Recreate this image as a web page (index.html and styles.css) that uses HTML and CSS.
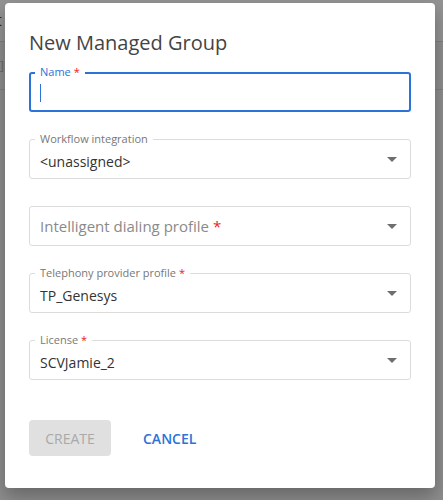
FILE: index.html
```html
<!DOCTYPE html>
<html lang="en">
<head>
<meta charset="utf-8">
<title>New Managed Group</title>
<link rel="stylesheet" href="styles.css">
</head>
<body>
<div class="backdrop-page">
  <span class="bg-t">t</span>
  <span class="bg-b">]:</span>
</div>
<div class="dialog">
  <h1 class="title">New Managed Group</h1>
  <div class="form">
    <div class="field focused">
      <span class="label">Name <span class="req">*</span></span>
      <span class="caret"></span>
    </div>
    <div class="field select">
      <span class="label">Workflow integration</span>
      <span class="value">&lt;unassigned&gt;</span>
      <span class="arrow"></span>
    </div>
    <div class="field select empty">
      <span class="placeholder">Intelligent dialing profile <span class="req">*</span></span>
      <span class="arrow"></span>
    </div>
    <div class="field select">
      <span class="label">Telephony provider profile <span class="req">*</span></span>
      <span class="value">TP_Genesys</span>
      <span class="arrow"></span>
    </div>
    <div class="field select">
      <span class="label">License <span class="req">*</span></span>
      <span class="value">SCVJamie_2</span>
      <span class="arrow"></span>
    </div>
  </div>
  <div class="actions">
    <button class="btn btn-create" disabled>CREATE</button>
    <button class="btn btn-cancel">CANCEL</button>
  </div>
</div>
</body>
</html>
```
FILE: styles.css
```css
html, body {
  margin: 0;
  padding: 0;
}
body {
  width: 443px;
  height: 500px;
  overflow: hidden;
  position: relative;
  background: #8d8d8d;
  font-family: "Open Sans", "Noto Sans", sans-serif;
}
.backdrop-page {
  position: absolute;
  inset: 0;
  background:
    linear-gradient(#7f7f7f, #7f7f7f) 0 41px / 100% 1px no-repeat,
    linear-gradient(#7f7f7f, #7f7f7f) 0 89px / 100% 1px no-repeat,
    linear-gradient(#939393, #939393) 0 0 / 100% 41px no-repeat;
}
.bg-t {
  position: absolute;
  left: -4px;
  top: 9px;
  font-size: 16px;
  color: #222;
}
.bg-b {
  position: absolute;
  left: 0;
  top: 57px;
  font-size: 12px;
  color: #666;
}
.dialog {
  position: relative;
  margin: 3px 0 0 5px;
  width: 430px;
  height: 485px;
  box-sizing: border-box;
  background: #fff;
  border-radius: 4px;
  padding: 26px 24px 0 24px;
  box-shadow: 0 8px 18px rgba(0, 0, 0, 0.28);
}
.title {
  margin: 0;
  font-size: 20px;
  line-height: 28px;
  font-weight: 400;
  color: #444;
}
.form {
  margin-top: 15px;
  display: flex;
  flex-direction: column;
  gap: 27px;
}
.field {
  position: relative;
  height: 40px;
  box-sizing: border-box;
  border: 1px solid #dcdcdc;
  border-radius: 3px;
  display: flex;
  align-items: center;
  padding: 4px 10px 0 10px;
}
.field.focused {
  border: 2px solid #2b73d8;
  padding-left: 9px;
}
.label {
  position: absolute;
  top: -8px;
  left: 5px;
  padding: 0 5px;
  background: #fff;
  font-size: 11px;
  line-height: 14px;
  color: #777;
  white-space: nowrap;
}
.focused .label {
  top: -9px;
  left: 4px;
  color: #2b73d8;
}
.req {
  color: #e8202a;
}
.caret {
  display: block;
  width: 1px;
  height: 18px;
  background: #2b73d8;
  margin-top: -2px;
}
.value {
  font-size: 14px;
  color: #333;
  flex: 1;
}
.placeholder {
  font-size: 15px;
  color: #8a8a8a;
  flex: 1;
  margin-top: -4px;
}
.arrow {
  width: 0;
  height: 0;
  border-left: 5px solid transparent;
  border-right: 5px solid transparent;
  border-top: 5px solid #6e6e6e;
  margin-right: 3px;
  margin-top: -4px;
}
.actions {
  margin-top: 40px;
  display: flex;
  gap: 16px;
}
.btn {
  height: 36px;
  padding: 0 16px;
  border: none;
  border-radius: 4px;
  font-family: "Open Sans", "Noto Sans", sans-serif;
  font-size: 14px;
  font-weight: 600;
  background: transparent;
}
.btn-create {
  background: #e0e0e0;
  color: #a9a9a9;
  font-weight: 400;
  width: 82px;
}
.btn-cancel {
  color: #2b73d8;
}
```
